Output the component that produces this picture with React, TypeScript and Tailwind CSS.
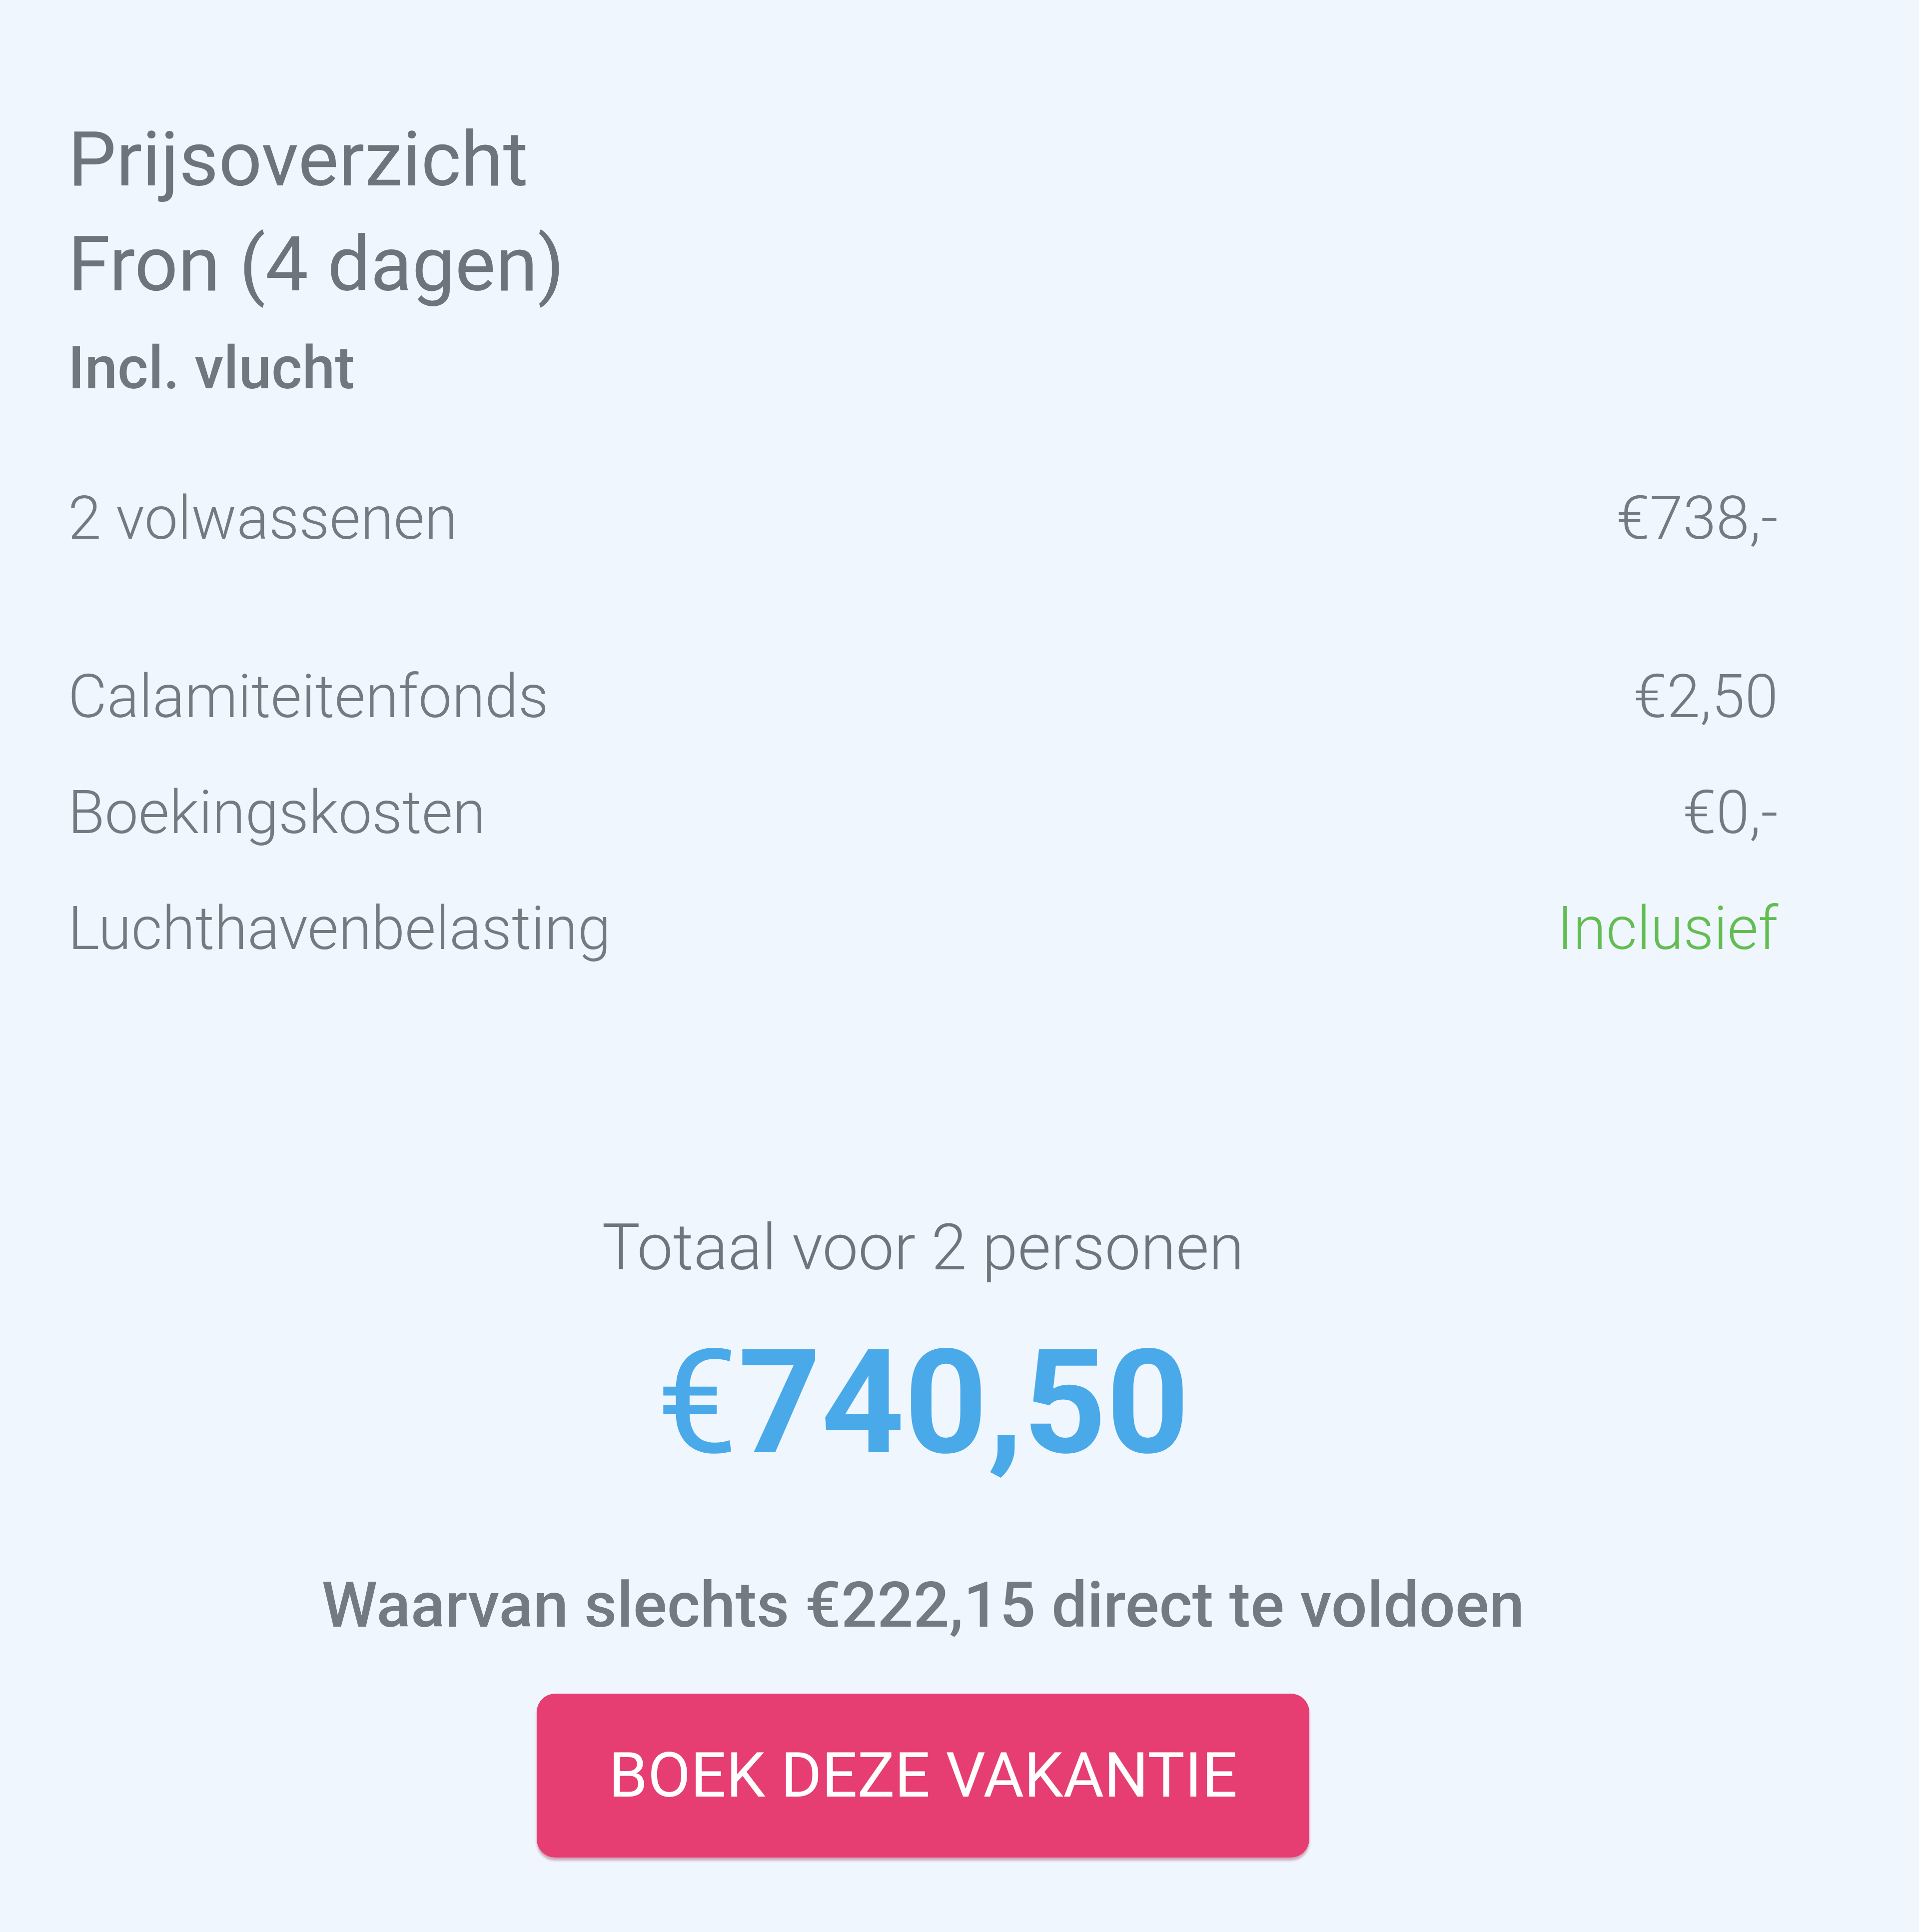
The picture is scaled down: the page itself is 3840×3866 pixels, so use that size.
import React from "react";

const rows = [
  { label: "Calamiteitenfonds", value: "€2,50" },
  { label: "Boekingskosten", value: "€0,-" },
  { label: "Luchthavenbelasting", value: "Inclusief", green: true },
];

export default function App() {
  return (
    /* Price overview panel */
    <div className="min-h-[3866px] w-full bg-[#eff6fd] pl-[136px] pr-[282px] pt-[214px] font-['Roboto',sans-serif] text-[#6e757d]">
      {/* Title */}
      <h1 className="text-[153px] leading-[210px] font-normal text-[#6d747c]">
        Prijsoverzicht
        <br />
        Fron (4 dagen)
      </h1>
      <p className="mt-[32px] text-[118px] leading-[142px] font-medium text-[#70777f]">
        Incl. vlucht
      </p>

      {/* Price lines */}
      <div className="mt-[113px] flex justify-between text-[120px] leading-[232px] font-light text-[#737a82]">
        <span>2 volwassenen</span>
        <span>€738,-</span>
      </div>
      <div className="mt-[125px] flex flex-col">
        {rows.map((row) => (
          <div
            key={row.label}
            className="flex justify-between text-[120px] leading-[232px] font-light text-[#737a82]"
          >
            <span>{row.label}</span>
            <span className={row.green ? "text-[#62bd52]" : ""}>{row.value}</span>
          </div>
        ))}
      </div>

      {/* Total */}
      <div className="mt-[445px] flex flex-col items-center">
        <p className="text-[128px] leading-[154px] font-light text-[#6e757d]">
          Totaal voor 2 personen
        </p>
        <p className="mt-[89px] text-[290px] leading-[290px] font-bold text-[#4aa9e9]">
          <span className="font-normal">€</span>740,50
        </p>
        <p className="mt-[188px] text-[127px] leading-[144px] font-medium text-[#737a82]">
          Waarvan slechts €222,15 direct te voldoen
        </p>
        <button className="mt-[105px] h-[328px] w-[1546px] rounded-[37px] bg-[#e63e73] text-[125px] font-normal text-white shadow-[0_6px_4px_rgba(150,30,70,0.35)]">
          BOEK DEZE VAKANTIE
        </button>
      </div>
    </div>
  );
}
